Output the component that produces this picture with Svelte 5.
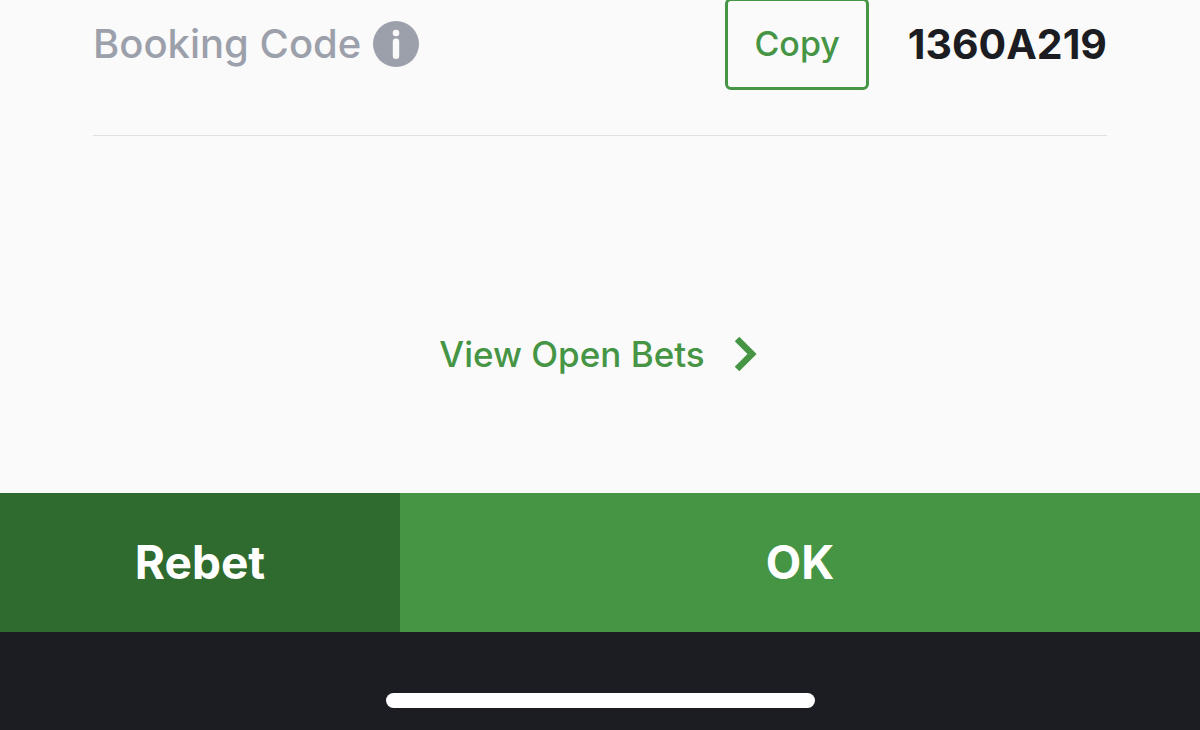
<script lang="ts">
  let code = '1360A219';

  function copyCode() {
    navigator.clipboard?.writeText(code);
  }
</script>

<main class="screen">
  <section class="details">
    <div class="booking">
      <div class="label">
        <span>Booking Code</span>
        <button class="info" aria-label="About booking codes">
          <svg viewBox="0 0 46 46" width="46" height="46" aria-hidden="true">
            <circle cx="23" cy="23" r="23" fill="#9ca0ab" />
            <circle cx="23" cy="12" r="3.3" fill="#fafafa" />
            <rect x="19.8" y="17.5" width="6.4" height="20.5" rx="3" fill="#fafafa" />
          </svg>
        </button>
      </div>
      <button class="copy" on:click={copyCode}>Copy</button>
      <strong class="code">{code}</strong>
    </div>
    <a class="open-bets" href="#open-bets">
      <span>View Open Bets</span>
      <svg viewBox="0 0 26 36" width="26" height="36" aria-hidden="true">
        <path d="M2 3l15 15-15 15" fill="none" stroke="#459545" stroke-width="6.5" />
      </svg>
    </a>
  </section>

  <div class="actions">
    <button class="rebet">Rebet</button>
    <button class="ok">OK</button>
  </div>

  <footer class="home-area">
    <div class="home-indicator"></div>
  </footer>
</main>

<style>
  :global(body) {
    background: #1c1d22;
  }

  .screen {
    font-family: Inter, 'Liberation Sans', sans-serif;
    background: #fafafa;
  }

  button {
    font: inherit;
    border: 0;
    padding: 0;
    cursor: pointer;
  }

  svg {
    display: block;
  }

  .details {
    display: flex;
    flex-direction: column;
    padding: 0 93px 117px;
  }

  /* the copy button's top edge runs just under the screen edge */
  .booking {
    display: flex;
    align-items: center;
    margin-top: -2px;
    padding-bottom: 45px;
    border-bottom: 1px solid #dfe0e2;
  }

  .label {
    display: flex;
    align-items: center;
    gap: 12px;
    margin-right: auto;
    font-size: 40px;
    font-weight: 500;
    line-height: 48px;
    color: #9ca0ab;
  }

  .info {
    background: none;
    border-radius: 50%;
  }

  .copy {
    padding: 20px 26px;
    border: 3px solid #459545;
    border-radius: 6px;
    background: none;
    color: #459545;
    font-size: 34px;
    font-weight: 500;
    line-height: 46px;
  }

  .code {
    margin-left: 39px;
    font-size: 41px;
    font-weight: 700;
    line-height: 48px;
    color: #1c1d22;
  }

  .open-bets {
    display: flex;
    align-items: center;
    align-self: center;
    gap: 30px;
    margin-top: 196px;
    font-size: 35px;
    font-weight: 500;
    line-height: 44px;
    color: #459545;
    text-decoration: none;
  }

  .actions {
    display: grid;
    grid-template-columns: 1fr 2fr;
    font-size: 46px;
    font-weight: 700;
    line-height: 59px;
  }

  .actions button {
    padding: 40px 0;
    color: #fff;
  }

  .actions .rebet {
    background: #2f6b2f;
  }

  .actions .ok {
    background: #459545;
  }

  .home-area {
    padding: 61px 0 22px;
    background: #1c1d22;
  }

  .home-indicator {
    width: 429px;
    height: 15px;
    margin: 0 auto;
    border-radius: 8px;
    background: #fff;
  }
</style>
